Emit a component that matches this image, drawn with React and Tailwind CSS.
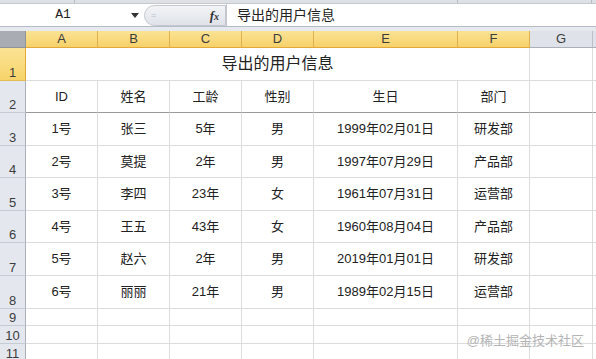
import React from 'react'

const cols = ['A', 'B', 'C', 'D', 'E', 'F']
const heads = ['ID', '姓名', '工龄', '性别', '生日', '部门']
const rows = [
  ['1号', '张三', '5年', '男', '1999年02月01日', '研发部'],
  ['2号', '莫提', '2年', '男', '1997年07月29日', '产品部'],
  ['3号', '李四', '23年', '女', '1961年07月31日', '运营部'],
  ['4号', '王五', '43年', '女', '1960年08月04日', '产品部'],
  ['5号', '赵六', '2年', '男', '2019年01月01日', '研发部'],
  ['6号', '丽丽', '21年', '男', '1989年02月15日', '运营部'],
]

const font = { fontFamily: '"Liberation Sans", "Noto Sans CJK SC", sans-serif' }

const RowHead = ({ n, active }) => (
  <div
    className={`flex items-end justify-center pb-[1px] text-[13px] leading-none text-[#3c3c3c] border-b ${
      active
        ? 'bg-gradient-to-b from-[#fbe394] to-[#f7d46a] border-b-[#e5bd55] border-r border-r-[#e2a93a]'
        : 'bg-[#e4e8ee] border-b-[#c6ccd4] border-r border-r-[#a9b0ba]'
    }`}
  >
    {n}
  </div>
)

const Cell = ({ children, dark, last }) => (
  <div
    className={`flex items-center justify-center text-[13px] text-[#222] border-b ${
      dark ? 'border-b-[#9a9a9a]' : 'border-b-[#dadcdd]'
    } ${last ? '' : 'border-r border-r-[#dadcdd]'}`}
  >
    {children}
  </div>
)

export default function App() {
  return (
    <div className="w-[596px] h-[359px] overflow-hidden bg-white relative" style={font}>
      {/* ribbon edge */}
      <div className="h-[4px] bg-[#dde1e6] border-b border-[#c4c9d0] flex">
        <div className="w-[75px] border-r border-[#b9bec6]" />
        <div className="w-[383px] border-r border-[#b9bec6]" />
        <div className="w-[134px] border-r border-[#b9bec6]" />
      </div>

      {/* formula bar */}
      <div className="h-[23px] flex items-center bg-white border-b border-[#b6bcc5]">
        <div className="w-[144px] h-full relative flex items-center justify-center">
          <span className="text-[13px] text-[#222] ml-[-18px]" style={{ fontFamily: '"Liberation Mono", monospace' }}>A1</span>
          <span className="absolute left-[131px] top-[9px] w-0 h-0 border-l-[4px] border-r-[4px] border-t-[5px] border-l-transparent border-r-transparent border-t-[#333]" />
        </div>
        <div className="w-[82px] h-[21px] rounded-l-full bg-gradient-to-b from-[#f2f4f7] to-[#dfe3e9] border border-[#c3c8cf] flex items-center justify-between pl-[6px] pr-[6px]">
          <span className="text-[9px] text-[#b8bec6] leading-none">=</span>
          <span className="text-[13px] italic font-bold text-[#333] leading-none" style={{ fontFamily: '"Liberation Serif", serif' }}>
            f<span className="text-[10px]">x</span>
          </span>
        </div>
        <div className="flex-1 h-full flex items-center pl-[10px] text-[14px] text-[#222] border-l border-[#c3c8cf]">
          导出的用户信息
        </div>
      </div>

      <div className="h-[4px] bg-[#e6e9ee]" />

      {/* sheet */}
      <div className="grid grid-cols-[26px_72px_72px_72px_72px_144px_72px_63px_1fr] grid-rows-[17px_33px_32px_33px_32px_33px_32px_33px_33px_17px_18px_18px]">
        <div className="bg-[#a9adb3] border-r border-b border-[#8f949b] relative">
          <span className="absolute right-[2px] bottom-[2px] w-0 h-0 border-l-[9px] border-t-[9px] border-l-transparent border-t-transparent border-r-0 border-b-0" />
        </div>
        {cols.map((c) => (
          <div
            key={c}
            className="flex items-center justify-center text-[13px] text-[#3c3c3c] bg-gradient-to-b from-[#fbe394] to-[#f7d169] border-r border-r-[#dcb04a] border-b border-b-[#e2a93a]"
          >
            {c}
          </div>
        ))}
        <div className="flex items-center justify-center text-[13px] text-[#3c3c3c] bg-[#dfe3e9] border-r border-r-[#b9c0c9] border-b border-b-[#a9b0ba]">
          G
        </div>
        <div className="bg-[#dfe3e9] border-b border-b-[#a9b0ba]" />

        {/* row 1 */}
        <RowHead n={1} active />
        <div className="col-span-6 flex items-center justify-center text-[16px] text-[#222] border-r border-b border-[#dadcdd]">
          导出的用户信息
        </div>
        <Cell />
        <Cell last />

        {/* row 2 */}
        <RowHead n={2} />
        {heads.map((h) => (
          <Cell key={h} dark>
            {h}
          </Cell>
        ))}
        <Cell dark />
        <Cell dark last />

        {rows.map((r, i) => (
          <React.Fragment key={i}>
            <RowHead n={i + 3} />
            {r.map((v, j) => (
              <Cell key={j}>{v}</Cell>
            ))}
            <Cell />
            <Cell last />
          </React.Fragment>
        ))}

        {[9, 10, 11].map((n) => (
          <React.Fragment key={n}>
            <RowHead n={n} />
            {[0, 1, 2, 3, 4, 5, 6].map((j) => (
              <Cell key={j} />
            ))}
            <Cell last />
          </React.Fragment>
        ))}
      </div>

      <div className="absolute right-[12px] bottom-[12px] text-[13px] text-[#b4b4b4] leading-none">@稀土掘金技术社区</div>
    </div>
  )
}
